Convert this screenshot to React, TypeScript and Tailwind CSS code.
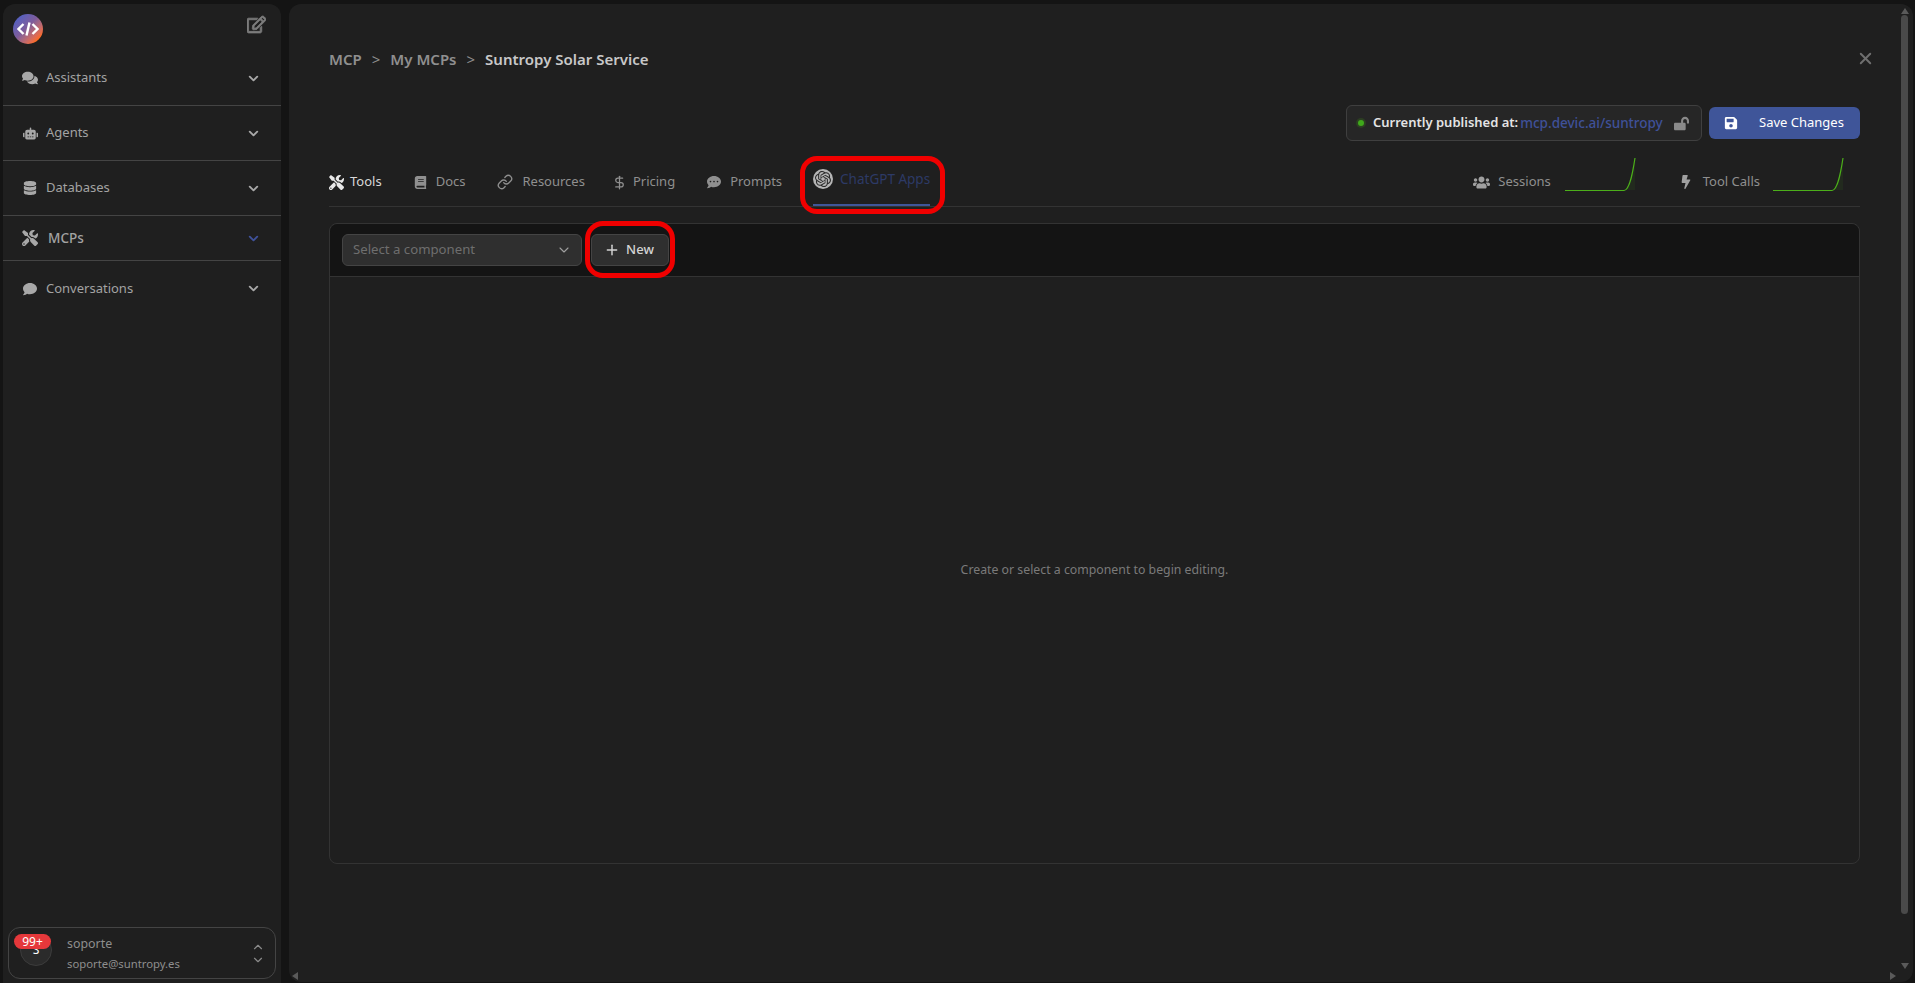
import { ChevronDown, ChevronUp, DollarSign, Link, Plus, X } from "lucide-react";
import {
  FaBolt,
  FaBook,
  FaComment,
  FaCommentDots,
  FaComments,
  FaDatabase,
  FaLockOpen,
  FaRegEdit,
  FaRobot,
  FaSave,
  FaTools,
  FaUsers,
} from "react-icons/fa";
import { SiOpenai } from "react-icons/si";

const navItems = [
  { label: "Assistants", icon: FaComments, size: 16, height: "h-[55px]", divider: true },
  { label: "Agents", icon: FaRobot, size: 15, height: "h-[55px]", divider: true },
  { label: "Databases", icon: FaDatabase, size: 14, height: "h-[55px]", divider: true },
  { label: "MCPs", icon: FaTools, size: 16, height: "h-[45px]", divider: true, active: true },
  { label: "Conversations", icon: FaComment, size: 14, height: "h-[55px]" },
];

const tabs = [
  { label: "Tools", icon: FaTools, size: 15, gap: "gap-[6px]", mr: "mr-[32px]", color: "text-[#d8d8d8]", iconColor: "text-[#e8e8e8]" },
  { label: "Docs", icon: FaBook, size: 13, gap: "gap-[9px]", mr: "mr-[32px]" },
  { label: "Resources", icon: Link, size: 16, gap: "gap-[9px]", mr: "mr-[27px]" },
  { label: "Pricing", icon: DollarSign, size: 15, gap: "gap-[6px]", mr: "mr-[32px]" },
  { label: "Prompts", icon: FaCommentDots, size: 14, gap: "gap-[9px]", mr: "mr-[31px]" },
];

function Sparkline() {
  return (
    <svg width="72" height="36" viewBox="0 0 72 36" fill="none">
      <path d="M62 33 C66 31 69 14 71 1 L71 33 Z" fill="#4caf1a" fillOpacity="0.08" />
      <path d="M1 33.5 H60 C66 33 69 14 71 1" stroke="#4caf1a" strokeWidth="1.2" />
    </svg>
  );
}

function Sidebar() {
  return (
    <aside className="w-[278px] shrink-0 mt-[4px] ml-[3px] rounded-t-xl bg-[#1f1f1f] flex flex-col">
      <div className="flex items-start justify-between pl-[10px] pr-[15px] pt-[10px]">
        <div className="w-[30px] h-[30px] rounded-full bg-gradient-to-br from-[#3d5fd0] via-[#7d5c9c] via-45% to-[#ff6a10] to-85% flex items-center justify-center">
          <svg width="22" height="16" viewBox="0 0 22 16" fill="none" stroke="white" strokeWidth="2.4">
            <path d="M6.5 3 L1.5 8 L6.5 13" />
            <path d="M15.5 3 L20.5 8 L15.5 13" />
            <path d="M12.5 1.5 L9.5 14.5" />
          </svg>
        </div>
        <FaRegEdit size={19} stroke="currentColor" strokeWidth={24} className="text-[#7c7c7c] mt-[1px]" />
      </div>
      <nav className="mt-[7px]">
        {navItems.map((item) => (
          <div
            key={item.label}
            className={`${item.height} flex items-center pl-[19px] pr-[20px] ${item.divider ? "border-b border-[#444444]" : ""}`}
          >
            <div className="w-[16px] flex justify-center text-[#a8a8a8]">
              <item.icon size={item.size} />
            </div>
            <span className={item.active ? "ml-[10px] text-[13.5px] font-medium text-[#a3a3a3]" : "ml-[8px] text-[13px] text-[#a3a3a3]"}>
              {item.label}
            </span>
            <ChevronDown
              size={15}
              strokeWidth={3}
              className={`ml-auto ${item.active ? "text-[#3f5199]" : "text-[#a8a8a8]"}`}
            />
          </div>
        ))}
      </nav>
      <div className="mt-auto mx-[5px] mb-[4px] h-[52px] rounded-xl border border-[#444444] flex items-center pl-[11px] pr-[10px] relative">
        <div className="w-[32px] h-[32px] rounded-full bg-[#2b2b2b] border border-[#3c3c3c] flex items-center justify-center text-[12px] text-white -mt-[6px]">
          S
        </div>
        <span className="absolute left-[5px] top-[6px] h-[15px] w-[37px] rounded-full bg-[#e5383b] text-white text-[12px] leading-[15px] text-center">
          99+
        </span>
        <div className="ml-[15px] mt-[2px] flex flex-col gap-[4px] leading-[16px] text-[#8e8e8e]">
          <span className="text-[12.4px]">soporte</span>
          <span className="text-[11.3px]">soporte@suntropy.es</span>
        </div>
        <div className="ml-auto flex flex-col text-[#8a8a8a]">
          <ChevronUp size={14} strokeWidth={2} className="-mb-[1px]" />
          <ChevronDown size={14} strokeWidth={2} />
        </div>
      </div>
    </aside>
  );
}

function TopBar() {
  return (
    <div className="flex items-start justify-between">
      <div className="flex items-center gap-[10px] text-[15px] font-semibold text-[#8f8f8f] h-[24px]">
        <span>MCP</span>
        <span className="font-normal">&gt;</span>
        <span>My MCPs</span>
        <span className="font-normal">&gt;</span>
        <span className="text-[#c8c8c8]">Suntropy Solar Service</span>
      </div>
      <X size={19} strokeWidth={2.4} className="text-[#6f6f6f] mt-[2px] -mr-[15px]" />
    </div>
  );
}

function PublishRow() {
  return (
    <div className="flex justify-end items-center gap-[7px] mt-[34px]">
      <div className="h-[36px] w-[356px] rounded-md border border-[#3f3f3f] bg-[#262626] flex items-center pl-[11px] text-[13px]">
        <span className="w-[6px] h-[6px] rounded-full bg-[#3fa81b] ring-2 ring-[#2c3f22]" />
        <span className="ml-[9px] font-semibold text-[#e4e4e4]">Currently published at:</span>
        <span className="ml-[2px] text-[13.5px] font-medium text-[#3f5199]">mcp.devic.ai/suntropy</span>
        <FaLockOpen size={15} className="ml-[11px] text-[#8a8a8a]" />
      </div>
      <button className="h-[32px] w-[151px] rounded-md bg-[#3f5599] text-white text-[13px] flex items-center pl-[15px]">
        <FaSave size={14} />
        <span className="ml-[21px]">Save Changes</span>
      </button>
    </div>
  );
}

function TabsRow() {
  return (
    <div className="flex items-center h-[66px] border-b border-[#333333]">
      <div className="flex items-center h-full">
        {tabs.map((tab) => (
          <div key={tab.label} className={`flex items-center ${tab.gap} ${tab.mr} pt-[17px] text-[13px] ${tab.color ?? "text-[#8f8f8f]"}`}>
            <tab.icon size={tab.size} className={tab.iconColor ?? "text-[#8f8f8f]"} />
            <span>{tab.label}</span>
          </div>
        ))}
        <div className="relative flex items-center gap-[7px] h-full pt-[13px] text-[13.5px] text-[#2d3a66] border-b-2 border-[#3f5599]">
          <span className="w-[20px] h-[20px] rounded-full bg-[#b5b5b5] flex items-center justify-center">
            <SiOpenai size={16} className="text-[#2a2a2a]" />
          </span>
          <span>ChatGPT Apps</span>
          <span className="absolute -left-[13px] -right-[15px] top-[15px] -bottom-[10px] rounded-[17px] border-[5px] border-[#f00000] pointer-events-none" />
        </div>
      </div>
      <div className="ml-auto flex items-center text-[13px] text-[#8f8f8f] pt-[17px] pr-[16px]">
        <FaUsers size={17} className="text-[#a0a0a0]" />
        <span className="ml-[8px]">Sessions</span>
        <span className="ml-[13px] -mt-[15px]">
          <Sparkline />
        </span>
        <FaBolt size={14} className="ml-[43px] text-[#a0a0a0]" />
        <span className="ml-[10px]">Tool Calls</span>
        <span className="ml-[12px] -mt-[15px]">
          <Sparkline />
        </span>
      </div>
    </div>
  );
}

function ComponentCard() {
  return (
    <div className="mt-[16px] h-[641px] rounded-lg border border-[#333333] flex flex-col">
      <div className="h-[53px] rounded-t-lg border-b border-[#333333] bg-[#141414] flex items-center pl-[12px] gap-[9px]">
        <div className="w-[240px] h-[32px] rounded-md border border-[#444444] bg-[#2f2f2f] flex items-center pl-[10px] pr-[9px] text-[13.2px] text-[#6e6e6e]">
          <span>Select a component</span>
          <ChevronDown size={16} strokeWidth={1.6} className="ml-auto text-[#a0a0a0]" />
        </div>
        <div className="relative w-[78px] h-[32px] rounded-md border border-[#444444] bg-[#2f2f2f] flex items-center justify-center gap-[6px] pr-[2px] text-[13px] font-medium text-[#d4d4d4]">
          <Plus size={16} strokeWidth={2.2} />
          <span>New</span>
          <span className="absolute -left-[7px] -right-[7px] -top-[14px] -bottom-[13px] rounded-[18px] border-[5px] border-[#f00000] pointer-events-none" />
        </div>
      </div>
      <div className="flex-1 flex items-center justify-center text-[12.3px] text-[#7a7a7a]">
        Create or select a component to begin editing.
      </div>
    </div>
  );
}

function Scrollbars() {
  return (
    <>
      <div className="absolute right-[5px] top-[11px] bottom-[68px] w-[7px] rounded-full bg-[#4a4a4a]" />
      <span className="absolute right-[4px] top-[4px] w-0 h-0 border-x-[4px] border-x-transparent border-b-[6px] border-b-[#5a5a5a]" />
      <span className="absolute right-[4px] bottom-[13px] w-0 h-0 border-x-[4px] border-x-transparent border-t-[6px] border-t-[#5a5a5a]" />
      <span className="absolute left-[3px] bottom-[2px] w-0 h-0 border-y-[4px] border-y-transparent border-r-[6px] border-r-[#5a5a5a]" />
      <span className="absolute right-[17px] bottom-[2px] w-0 h-0 border-y-[4px] border-y-transparent border-l-[6px] border-l-[#5a5a5a]" />
    </>
  );
}

export default function App() {
  return (
    <div
      className="h-screen w-full flex bg-[#141414] overflow-hidden"
      style={{ fontFamily: '"Noto Sans", "Open Sans", sans-serif' }}
    >
      <Sidebar />
      <main className="relative flex-1 ml-[8px] mt-[4px] mb-[1px] mr-[2px] rounded-xl bg-[#1f1f1f] pl-[40px] pr-[53px] pt-[43px]">
        <TopBar />
        <PublishRow />
        <TabsRow />
        <ComponentCard />
        <Scrollbars />
      </main>
    </div>
  );
}
